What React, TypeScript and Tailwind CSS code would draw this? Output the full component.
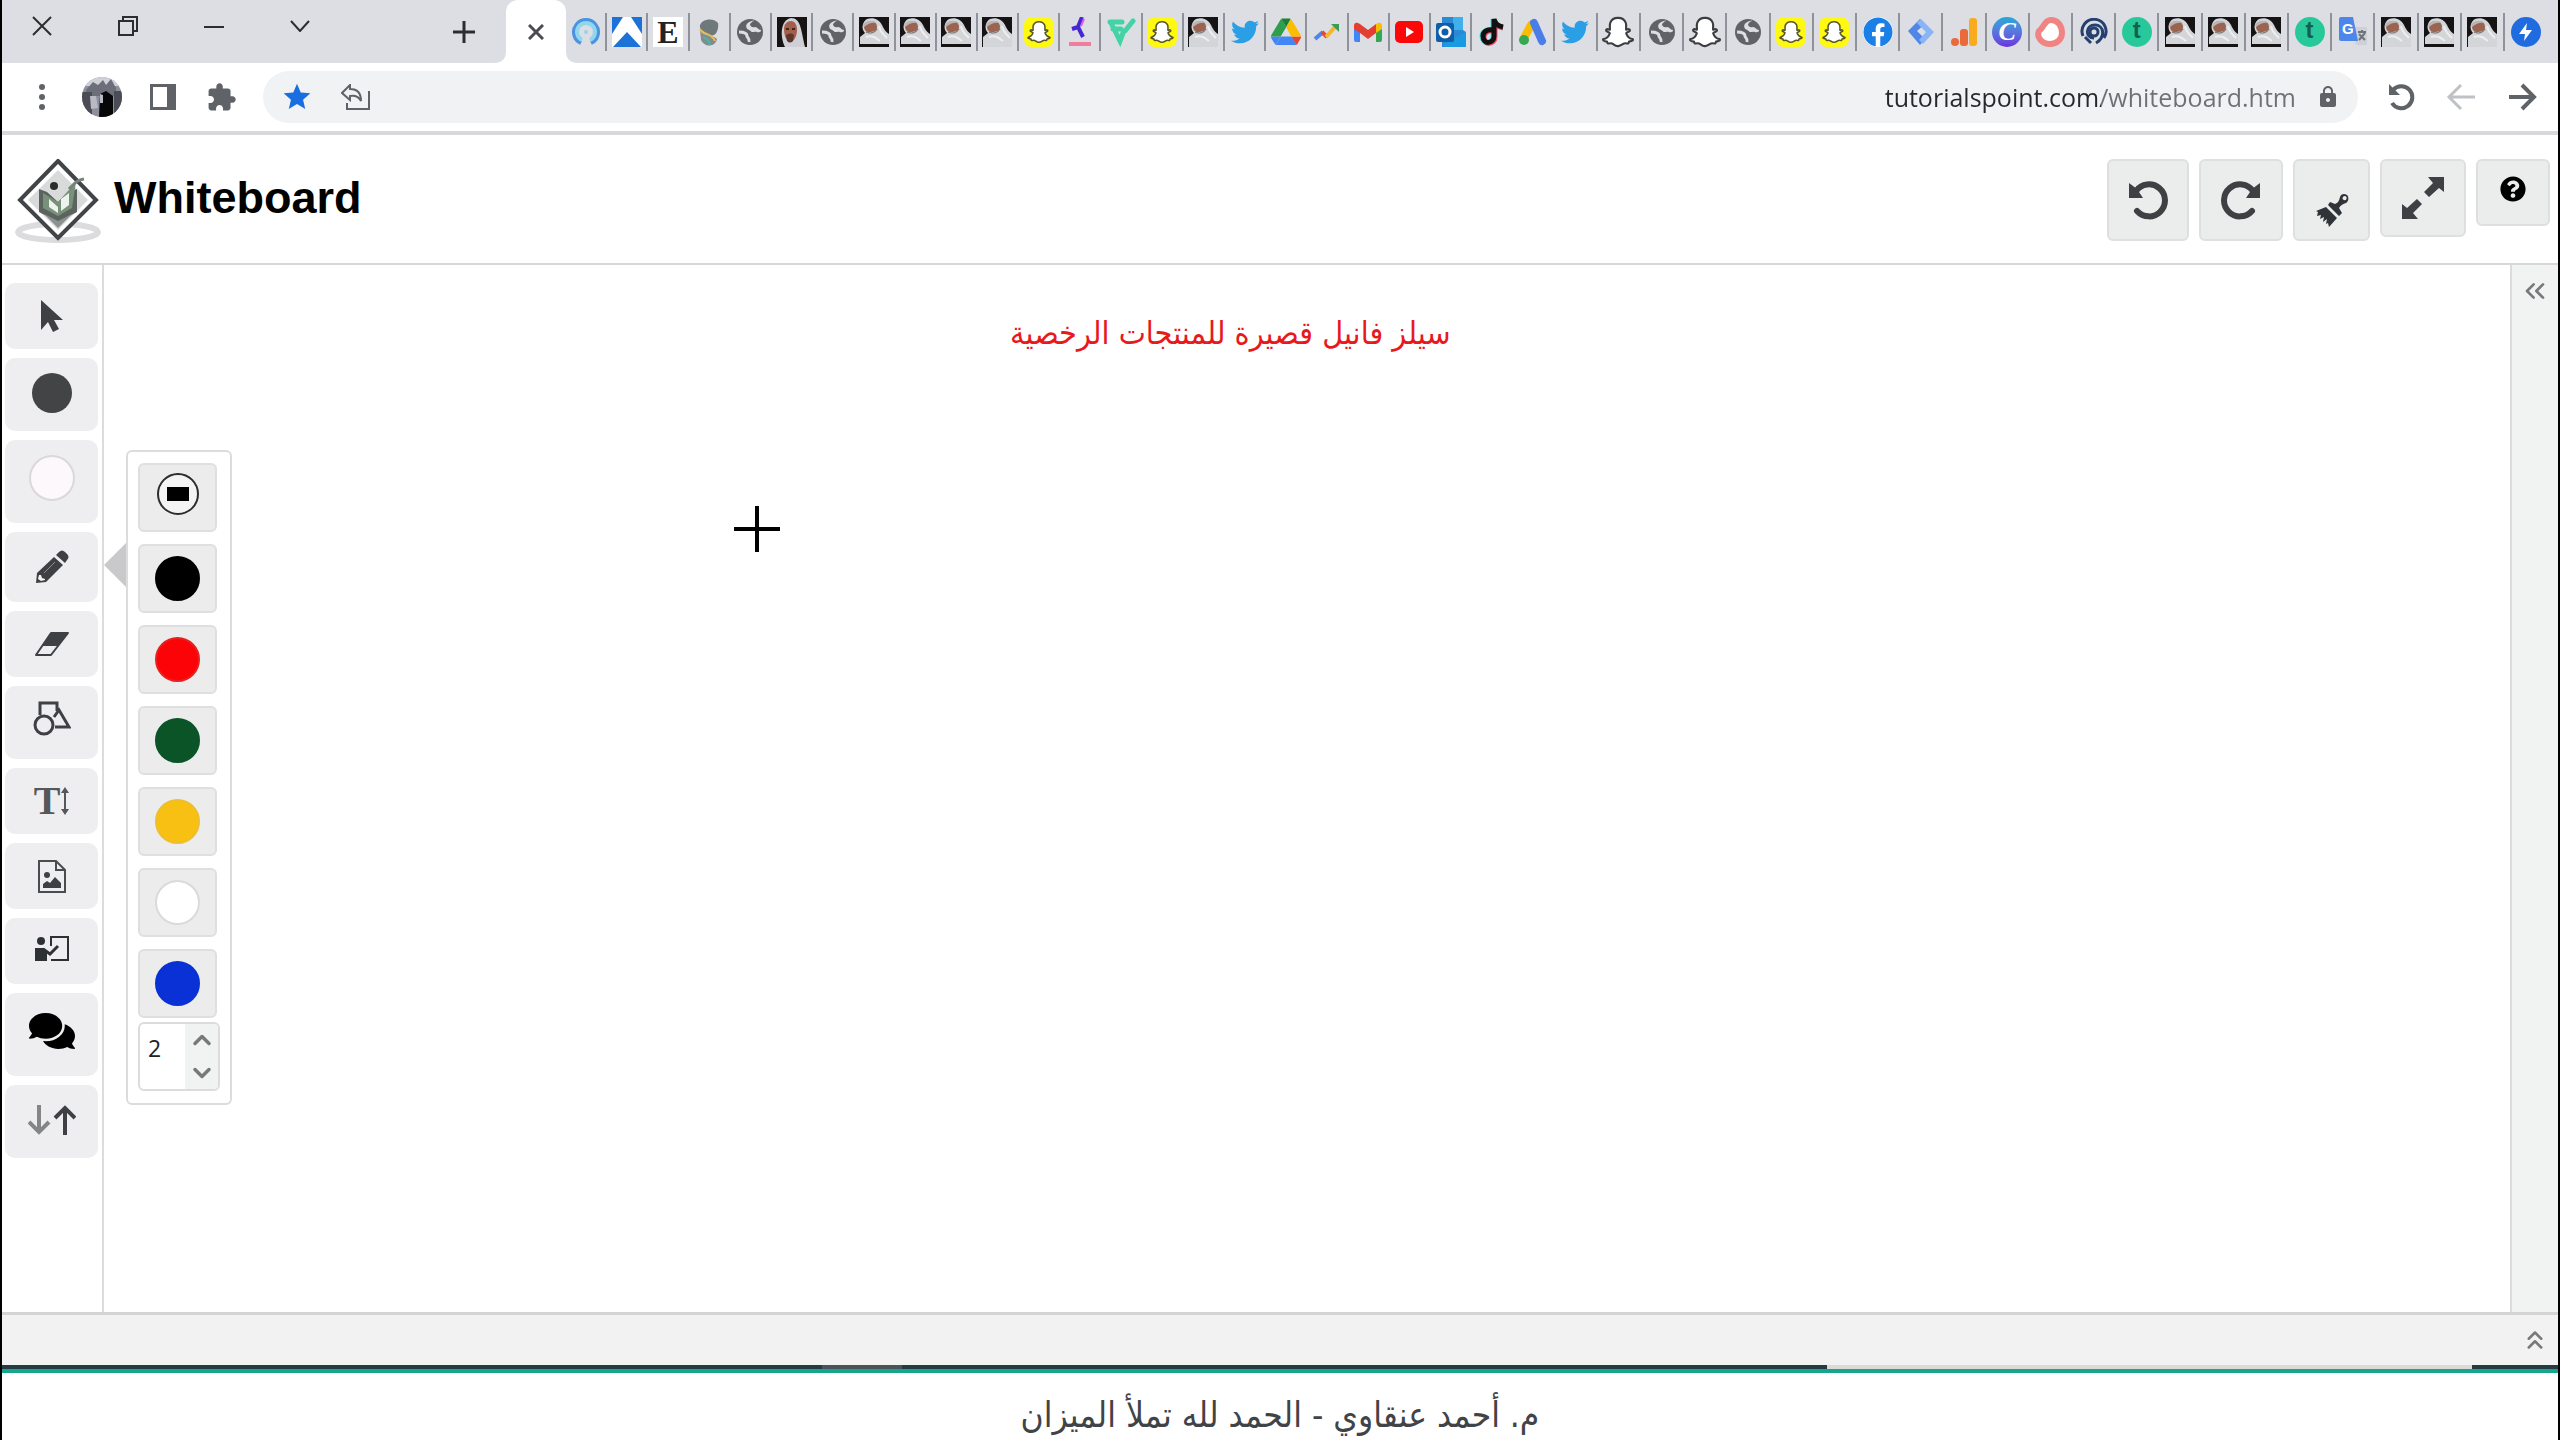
import React, { useState } from 'react';
import { ArrowLeft, ArrowRight, ChevronDown, ChevronUp, ChevronsLeft, ChevronsUp } from 'lucide-react';
import { FaComments, FaFacebook, FaQuestionCircle, FaSnapchatGhost, FaTwitter } from 'react-icons/fa';
import { MdLock, MdStar } from 'react-icons/md';

type FaviconName =
  | 'ring' | 'peak' | 'letterE' | 'swirl' | 'globe' | 'face' | 'photo' | 'photoPlain' | 'snap' | 'kick' | 'vee'
  | 'twitter' | 'drive' | 'trend' | 'gmail' | 'youtube' | 'outlook' | 'tiktok' | 'ads' | 'ghost' | 'facebook'
  | 'tag' | 'analytics' | 'canva' | 'blob' | 'spiral' | 'tee' | 'translate' | 'bolt';

const narrowTabs: FaviconName[] = [
  'ring', 'peak', 'letterE', 'swirl', 'globe', 'face', 'globe', 'photo', 'photo', 'photo', 'photoPlain', 'snap',
  'kick', 'vee', 'snap', 'photoPlain', 'twitter', 'drive', 'trend', 'gmail', 'youtube', 'outlook', 'tiktok', 'ads',
];

const wideTabs: FaviconName[] = [
  'twitter', 'ghost', 'globe', 'ghost', 'globe', 'snap', 'snap', 'facebook', 'tag', 'analytics', 'canva', 'blob',
  'spiral', 'tee', 'photo', 'photo', 'photo', 'tee', 'translate', 'photoPlain', 'photo', 'photoPlain', 'bolt',
];

const Photo: React.FC<{ strip?: boolean }> = ({ strip }) => (
  <svg width="30" height="30" viewBox="0 0 30 30">
    <rect width="30" height="30" fill="#151313" />
    <path d="M1 30V20l5-4C2 12 3 5 8 2c6-2 12 0 15 6 2 4 3 6 7 9v13z" fill="#d3d5d8" />
    <path d="M5 9c0-3 3-5 7-5s6 3 6 6c0 4-4 5-8 5-3 0-5-2-5-6z" fill="#9b6450" />
    <path d="M4 8c2-4 9-6 14-2-4-1-9 0-13 4z" fill="#b9b5b6" />
    <path d="M7 15c4 2 9 1 11-3" stroke="#6e5a55" fill="none" />
    <path d="M20 9c1 6 4 8 8 12M7 20c6-2 9 0 14 4" stroke="#eceef0" strokeWidth="2" fill="none" />
    {strip && <rect y="27" width="30" height="3" fill="#151313" />}
  </svg>
);

const Favicon: React.FC<{ name: FaviconName }> = ({ name }) => {
  switch (name) {
    case 'globe':
      return (
        <svg width="28" height="28" viewBox="0 0 28 28" fill="none">
          <circle cx="14" cy="14" r="13" fill="#5f6368" />
          <path d="M18 4c-5 1-7 3-6 5 2 3 5 2 5 5M3 14c5 0 8 1 8 4 0 2 3 2 2 6" stroke="#dcdee3" strokeWidth="3" />
          <path d="M15 4c6 0 10 4 10 9-3 3-4 0-7 1-3 0-4-3-7-3-1-4 1-6 4-7z" fill="#dcdee3" />
          <path d="M17 3c5 2 8 5 8 9-3 0-3-3-6-3-3 1-5-1-5-3z" fill="#5f6368" />
        </svg>
      );
    case 'twitter':
      return <FaTwitter size={28} color="#2b9fe6" />;
    case 'facebook':
      return <FaFacebook size={30} color="#1b7fe8" className="rounded-full bg-white" />;
    case 'ghost':
      return <FaSnapchatGhost size={30} color="#ffffff" stroke="#3b3d40" strokeWidth={36} overflow="visible" />;
    case 'snap':
      return (
        <span className="flex size-[30px] items-center justify-center rounded-lg bg-[#fff911]">
          <FaSnapchatGhost size={22} color="#ffffff" stroke="#55552a" strokeWidth={36} overflow="visible" />
        </span>
      );
    case 'photo':
      return <Photo strip />;
    case 'photoPlain':
      return <Photo />;
    case 'face':
      return (
        <svg width="30" height="30" viewBox="0 0 30 30">
          <rect width="30" height="30" fill="#171313" />
          <path d="M8 30C3 20 3 3 14 1c10 0 10 12 14 29z" fill="#cfd0d6" />
          <path d="M7 12c0-5 3-8 7-8 4 0 6 4 6 9 0 6-3 12-7 12-4-1-6-7-6-13z" fill="#a35f49" />
          <path d="M9 18c3-2 6-2 8 0l-1 6c-2 2-4 2-6 0z" fill="#5b372d" />
          <path d="M9 12h3m3 0h3" stroke="#3b2420" strokeWidth="2" />
        </svg>
      );
    case 'letterE':
      return (
        <span className="flex size-[30px] items-center justify-center bg-white font-['Liberation_Serif',serif] text-[32px] leading-[30px] font-bold text-[#222222]">
          E
        </span>
      );
    case 'tee':
      return (
        <span className="flex size-[30px] items-center justify-center rounded-full bg-[#27c99a] pb-1 font-['Liberation_Sans',sans-serif] text-[24px] leading-[24px] font-bold text-[#14604d]">
          t
        </span>
      );
    case 'canva':
      return (
        <span className="flex size-[30px] items-center justify-center rounded-full bg-linear-to-b from-[#19a9d8] to-[#6a2fe0] font-['Liberation_Serif',serif] text-[26px] leading-[24px] font-bold text-white italic">
          C
        </span>
      );
    case 'ring':
      return (
        <svg width="30" height="30" viewBox="0 0 30 30" fill="none">
          <path d="M10 26A12 12 0 1 1 20 26" stroke="#4a93df" strokeWidth="4" />
          <path d="M11 23A9 9 0 1 1 19 23" stroke="#8fd6ee" strokeWidth="4" />
          <circle cx="15" cy="15" r="2" fill="#8fd6ee" />
        </svg>
      );
    case 'peak':
      return (
        <svg width="30" height="30" viewBox="0 0 30 30">
          <rect width="30" height="30" fill="#fff" />
          <path d="M0 0h11L0 17zM19 0h11v17zM15 15l14 15H1z" fill="#1d72d8" />
        </svg>
      );
    case 'swirl':
      return (
        <svg width="30" height="30" viewBox="0 0 30 30" fill="none">
          <path d="M24 6C19 0 8 2 6 8c-1 5 4 8 10 10 7 3 9-8 8-12z" fill="#6f797c" />
          <path d="M6 13c2 6 14 5 17 9-2 9-13 8-16 1z" fill="#858b8d" />
          <path d="M6 12c3 6 12 4 15 12" stroke="#e2bd54" strokeWidth="2" />
          <path d="M9 20c3 1 6 3 7 8" stroke="#42b8a6" strokeWidth="2" />
        </svg>
      );
    case 'kick':
      return (
        <svg width="30" height="30" viewBox="0 0 30 30" fill="none">
          <path d="M17 0L13 10l5 10M13 10L7 12" stroke="#4726d8" strokeWidth="4" />
          <path d="M19 2l-3 7" stroke="#e35ae0" strokeWidth="2" />
          <path d="M4 27h22" stroke="#ef7d9b" strokeWidth="4" />
        </svg>
      );
    case 'vee':
      return (
        <svg width="30" height="30" viewBox="0 0 30 30" fill="none" stroke="#43d3a5" strokeWidth="5" strokeLinecap="round">
          <path d="M4 5h12M7 12h8M5 6l9 18 3-8M19 14l8-10" />
        </svg>
      );
    case 'drive':
      return (
        <svg width="30" height="28" viewBox="0 0 87 78">
          <path d="M7 67l4 6c1 2 2 3 3 3l14-24H0c0 2 0 3 1 5z" fill="#4285f4" />
          <path d="M44 25L30 1c-1 1-3 2-3 3L1 48c-1 2-1 3-1 4h28z" fill="#2e9e4d" />
          <path d="M74 76c1 0 3-1 3-3l10-17c0-1 0-3 0-4H59l6 12z" fill="#ea4335" />
          <path d="M44 25L57 1c-1-1-3-1-5-1H35c-2 0-4 0-5 1z" fill="#188038" />
          <path d="M59 52H28L14 76c1 1 3 1 4 1h51c2 0 3 0 5-1z" fill="#4285f4" />
          <path d="M73 26L60 4c-1-1-2-2-3-3L44 25l15 27h28c0-1 0-3-1-4z" fill="#fbbc04" />
        </svg>
      );
    case 'trend':
      return (
        <svg width="30" height="30" viewBox="0 0 30 30" fill="none" strokeWidth="4">
          <path d="M3 22l8-7" stroke="#4f86ec" />
          <path d="M10 15l5 5" stroke="#dd4b3e" />
          <path d="M14 20l9-10" stroke="#f5b62c" />
          <path d="M19 7h8v8z" fill="#3a9c57" />
        </svg>
      );
    case 'gmail':
      return (
        <svg width="28" height="20" viewBox="0 0 28 20">
          <path d="M0 3l6 4v13H2c-1 0-2-1-2-2z" fill="#4285f4" />
          <path d="M28 3l-6 4v13h4c1 0 2-1 2-2z" fill="#34a853" />
          <path d="M22 2l2-1c2-1 4 0 4 3v3l-6 4z" fill="#fbbc04" />
          <path d="M6 2L4 1C2 0 0 1 0 4v3l6 4 8 6 8-6V2l-8 6z" fill="#e23e32" />
        </svg>
      );
    case 'youtube':
      return (
        <svg width="28" height="22" viewBox="0 0 28 22">
          <rect width="28" height="22" rx="5" fill="#fb0808" />
          <path d="M11 6l8 5-8 5z" fill="#fff" />
        </svg>
      );
    case 'outlook':
      return (
        <svg width="30" height="30" viewBox="0 0 30 30">
          <path d="M6 0h21v13l3 2v15H6z" fill="#2a8ad6" />
          <path d="M17 0h10v13H17z" fill="#3fb0ec" />
          <path d="M7 28l23-13v15H9z" fill="#1b9ae4" />
          <rect y="6" width="18" height="19" rx="2" fill="#0f5ea8" />
          <circle cx="9" cy="15" r="5" fill="none" stroke="#fff" strokeWidth="3" />
        </svg>
      );
    case 'tiktok':
      return (
        <svg width="26" height="30" viewBox="0 0 26 30" fill="none" strokeWidth="5">
          <path d="M12 13c-5-1-9 2-9 6 0 9 11 8 11 0V2c1 5 4 7 9 8" stroke="#52d7dc" />
          <path d="M14 14c-5-1-9 2-9 6 0 9 11 8 11 0V4c1 5 4 6 8 7" stroke="#ee4c68" />
          <path d="M13 13c-5-1-9 2-9 6 0 9 11 8 11 0V2c1 5 4 7 9 8" stroke="#111" />
        </svg>
      );
    case 'ads':
      return (
        <svg width="30" height="28" viewBox="0 0 30 28" strokeLinecap="round">
          <path d="M13 7L6 20" stroke="#fbbc04" strokeWidth="8" />
          <path d="M16 5l8 18" stroke="#4a7de8" strokeWidth="8" />
          <circle cx="6" cy="22" r="5" fill="#34a853" />
        </svg>
      );
    case 'tag':
      return (
        <svg width="30" height="30" viewBox="0 0 30 30">
          <path d="M14 2l-12 12 12 14 5-6-8-8 8-7z" fill="#4f86e8" />
          <path d="M15 2l13 13-11 12-4-4 7-8-9-9z" fill="#8ab4f8" />
        </svg>
      );
    case 'analytics':
      return (
        <svg width="28" height="28" viewBox="0 0 28 28">
          <circle cx="5" cy="24" r="4" fill="#ea6a3c" />
          <rect x="10" y="11" width="8" height="17" rx="3" fill="#ea6a3c" />
          <rect x="19" width="8" height="28" rx="3" fill="#f9ab20" />
        </svg>
      );
    case 'blob':
      return (
        <svg width="30" height="30" viewBox="0 0 30 30">
          <path d="M4 14C9 11 9 3 16 3c7 0 11 6 11 13 0 6-5 11-12 11C7 27 1 20 4 14z" fill="#fff" stroke="#f08383" strokeWidth="6" />
        </svg>
      );
    case 'spiral':
      return (
        <svg width="28" height="28" viewBox="0 0 28 28" fill="none" stroke="#25406f" strokeWidth="3">
          <circle cx="14" cy="14" r="4" />
          <path d="M14 20c-9 0-9-13 1-13 9 0 11 12 1 18M3 18A12 12 0 1 1 24 20M5 19l6 6" />
        </svg>
      );
    case 'translate':
      return (
        <svg width="30" height="30" viewBox="0 0 30 30">
          <path d="M13 10h14c2 0 2 1 2 2v16H18z" fill="#cdd0d6" />
          <path d="M1 2c0-1 1-2 2-2h12l5 24H3c-1 0-2-1-2-2z" fill="#4c86ea" />
          <text x="4" y="17" fontSize="15" fontWeight="700" fontFamily="Liberation Sans, sans-serif" fill="#fff">G</text>
          <path d="M20 15h8M24 13v3M21 23l6-7M21 17l6 6" stroke="#6f747b" strokeWidth="2" fill="none" />
        </svg>
      );
    case 'bolt':
      return (
        <svg width="30" height="30" viewBox="0 0 30 30">
          <circle cx="15" cy="15" r="15" fill="#1f6ce0" />
          <path d="M16 6L8 17h6l-1 7 8-11h-6z" fill="#fff" />
        </svg>
      );
  }
};

const TabGroup: React.FC<{ tabs: FaviconName[]; className: string }> = ({ tabs, className }) => (
  <div className={`flex min-w-0 basis-0 items-center ${className}`}>
    {tabs.map((name, index) => (
      <button
        key={index}
        aria-label={name}
        className={`flex h-[38px] min-w-0 flex-1 items-center justify-center ${name === 'bolt' ? '' : 'border-r-2 border-[#8f9298]'}`}
      >
        <Favicon name={name} />
      </button>
    ))}
  </div>
);

const TabStrip: React.FC = () => (
  <div className="flex h-[63px] items-center bg-[#dcdee3] pr-3">
    <div className="flex w-[482px] shrink-0 items-center gap-[46px] pl-5 text-[#2c2d30]">
      <button aria-label="Close window" className="flex h-[52px] w-10 items-center justify-center self-start">
        <svg width="20" height="20" viewBox="0 0 20 20" stroke="currentColor" strokeWidth="2"><path d="M1 1l18 18M19 1L1 19" /></svg>
      </button>
      <button aria-label="Restore" className="flex h-[52px] w-10 items-center justify-center self-start">
        <svg width="20" height="20" viewBox="0 0 20 20" fill="none" stroke="currentColor" strokeWidth="2"><path d="M1 5h14v14H1zM5 5V1h14v14h-4" /></svg>
      </button>
      <button aria-label="Minimize" className="flex h-[54px] w-10 items-center justify-center self-start">
        <svg width="20" height="2" viewBox="0 0 20 2" stroke="currentColor" strokeWidth="2"><path d="M0 1h20" /></svg>
      </button>
      <button aria-label="Search tabs" className="flex h-[52px] w-10 items-center justify-center self-start">
        <svg width="20" height="12" viewBox="0 0 20 12" fill="none" stroke="currentColor" strokeWidth="2"><path d="M1 1l9 10 9-10" /></svg>
      </button>
      <button aria-label="New tab" className="ml-auto flex h-16 w-10 items-center justify-center">
        <svg width="22" height="22" viewBox="0 0 22 22" stroke="currentColor" strokeWidth="3"><path d="M11 0v22M0 11h22" /></svg>
      </button>
    </div>
    <div className="relative ml-[22px] flex h-full w-[60px] shrink-0 items-center justify-center rounded-t-xl bg-white">
      <svg className="absolute bottom-0 -left-3" width="12" height="12" viewBox="0 0 12 12"><path d="M12 0v12H0C8 12 12 8 12 0z" fill="#fff" /></svg>
      <svg className="absolute -right-3 bottom-0" width="12" height="12" viewBox="0 0 12 12"><path d="M0 0v12h12C4 12 0 8 0 0z" fill="#fff" /></svg>
      <button aria-label="Close tab">
        <svg width="16" height="16" viewBox="0 0 16 16" stroke="#4a4c50" strokeWidth="3"><path d="M1 1l14 14M15 1L1 15" /></svg>
      </button>
    </div>
    <TabGroup tabs={narrowTabs} className="grow-[990]" />
    <TabGroup tabs={wideTabs} className="grow-[993]" />
  </div>
);

const AddressBar: React.FC = () => {
  const [url, setUrl] = useState('tutorialspoint.com/whiteboard.htm');

  return (
    <div className="flex h-[72px] items-center border-b-4 border-[#d7d8db] bg-white pr-5 pl-5 text-[#5f6368]">
      <button aria-label="Menu" className="flex w-10 justify-center">
        <svg width="6" height="26" viewBox="0 0 6 26" fill="currentColor"><circle cx="3" cy="3" r="3" /><circle cx="3" cy="13" r="3" /><circle cx="3" cy="23" r="3" /></svg>
      </button>
      <button aria-label="Profile" className="ml-5 size-10 overflow-hidden rounded-full">
        <svg width="40" height="40" viewBox="0 0 40 40">
          <rect width="40" height="40" fill="#8d909c" />
          <path d="M0 0h40v9H0z" fill="#cfd0d8" />
          <path d="M4 13l7-8 5 3 5-5 3 5 5-6 5 9v8H4z" fill="#6c6f7a" />
          <path d="M0 15h10v25H0zM32 14h8v26h-8z" fill="#4a4c56" />
          <path d="M18 17l6-3 7 5v21H17z" fill="#070709" />
          <path d="M8 19h6l2 12-7 1zM18 17l3 1v8h-3z" fill="#b9bac4" />
        </svg>
      </button>
      <button aria-label="Side panel" className="ml-7">
        <svg width="26" height="26" viewBox="0 0 26 26"><path d="M0 0h26v26H0zM3 3v20h14V3z" fill="currentColor" fillRule="evenodd" /></svg>
      </button>
      <button aria-label="Extensions" className="ml-[30px]">
        <svg width="31" height="31" viewBox="0 0 24 24" fill="currentColor">
          <path d="M20.5 11H19V7c0-1.1-.9-2-2-2h-4V3.5C13 2.12 11.88 1 10.5 1S8 2.12 8 3.5V5H4c-1.1 0-1.99.9-1.99 2v3.8H3.5c1.49 0 2.7 1.21 2.7 2.7s-1.21 2.7-2.7 2.7H2V20c0 1.1.9 2 2 2h3.8v-1.5c0-1.49 1.21-2.7 2.7-2.7 1.49 0 2.7 1.21 2.7 2.7V22H17c1.1 0 2-.9 2-2v-4h1.5c1.38 0 2.5-1.12 2.5-2.5S21.88 11 20.5 11z" />
        </svg>
      </button>
      <div className="ml-[26px] flex h-[52px] grow items-center rounded-full bg-[#f1f2f4] px-[18px]">
        <button aria-label="Bookmark"><MdStar size={32} color="#1a6fe0" /></button>
        <button aria-label="Share" className="ml-7">
          <svg width="30" height="26" viewBox="0 0 30 26" fill="none" stroke="currentColor" strokeWidth="2">
            <path d="M28 7v18H6v-6" />
            <path d="M9 1L1 9l8 7v-4c6-1 9 1 11 5 0-7-3-12-11-12z" />
          </svg>
        </button>
        <input
          type="text"
          dir="ltr"
          aria-label="Address"
          value={url}
          onChange={(e) => setUrl(e.target.value)}
          className="h-10 min-w-0 grow bg-linear-to-l from-[#6d7175] from-[195px] to-[#26282c] to-[195px] bg-clip-text text-right font-['Open_Sans',sans-serif] text-[25px] text-transparent outline-none"
        />
        <MdLock size={24} className="ml-5" />
      </div>
      <div className="ml-[28px] flex items-center gap-7">
        <button aria-label="Reload">
          <svg width="32" height="28" viewBox="0 0 32 28" fill="none" stroke="currentColor" strokeWidth="4">
            <path d="M7 7a11 11 0 1 1-1 13" />
            <path d="M3 1v11h11z" fill="currentColor" stroke="none" />
          </svg>
        </button>
        <button aria-label="Forward" className="text-[#bfc1c4]">
          <svg width="32" height="28" viewBox="0 0 32 28" fill="none" stroke="currentColor" strokeWidth="3"><path d="M29 14H4M15 2L3 14l12 12" /></svg>
        </button>
        <button aria-label="Back">
          <svg width="32" height="28" viewBox="0 0 32 28" fill="none" stroke="currentColor" strokeWidth="4"><path d="M3 14h24M16 2l12 12-12 12" /></svg>
        </button>
      </div>
    </div>
  );
};

const Logo: React.FC = () => (
  <svg width="88" height="86" viewBox="0 0 88 86" fill="none">
    <ellipse cx="44" cy="73" rx="40" ry="8" stroke="#dcdcde" strokeWidth="6" />
    <path d="M44 2L82 41 44 79 6 41z" fill="#fff" stroke="#414548" strokeWidth="4" />
    <path d="M44 11l30 30-30 30-30-30z" fill="#d9dbdb" />
    <path d="M25 30v23l19 10 19-10V30l-8 3-11 10-11-10z" fill="#5c6260" />
    <path d="M29 34l15 9 18-20-4 26-14 8-15-8z" fill="#789179" />
    <path d="M35 40l9 8v6l-9-6zM47 40l8-6v12l-8 6z" fill="#edf3ee" />
    <path d="M30 55l14 14 14-14-14 7z" fill="#8b928e" />
    <circle cx="40" cy="27" r="4" fill="#2e2b2e" />
    <path d="M55 30c6-6 8-9 15-10" stroke="#75837a" strokeWidth="3" />
  </svg>
);

const UndoIcon: React.FC<{ flip?: boolean }> = ({ flip }) => (
  <svg width="40" height="40" viewBox="0 0 40 40" fill="none" className={flip ? '-scale-x-100' : ''}>
    <path d="M8 11a16 16 0 1 1 1 20" stroke="#3e4144" strokeWidth="6" strokeLinecap="round" />
    <path d="M1 3l8 6 6 9H1z" fill="#3e4144" />
  </svg>
);

const Header: React.FC = () => (
  <header className="flex h-[130px] items-start justify-between border-b-2 border-[#d7d7d8] bg-white pt-6 pr-2 pl-3">
    <div className="flex items-center gap-3">
      <Logo />
      <h1 className="pb-2 font-['Liberation_Sans',sans-serif] text-[45px] leading-[72px] font-bold text-black">Whiteboard</h1>
    </div>
    <div className="flex items-start gap-[10px]">
      <button aria-label="Undo" className="flex h-[82px] w-[82px] items-center justify-center rounded-md border-2 border-[#dedfdf] bg-[#ebecec]">
        <UndoIcon />
      </button>
      <button aria-label="Redo" className="flex h-[82px] w-[84px] items-center justify-center rounded-md border-2 border-[#dedfdf] bg-[#ebecec]">
        <UndoIcon flip />
      </button>
      <button aria-label="Clear" className="flex h-[82px] w-[77px] items-center justify-center rounded-md border-2 border-[#dedfdf] bg-[#ebecec] pt-5">
        <svg width="34" height="34" viewBox="0 0 34 34" fill="#2e3438">
          <path d="M32 2c-3-2-6-1-7 2-1 4-2 6-5 7l-5-2-2 3 11 11 3-3-3-5c2-3 4-4 7-5 3-2 3-6 1-8zm-4 2a2 2 0 1 1 1 3 2 2 0 0 1-1-3z" fillRule="evenodd" />
          <path d="M11 14l11 11-8 9-1-4-2 1 1-5-4 3 1-5-4 2 1-4-4 1 1-4-2-1z" />
        </svg>
      </button>
      <button aria-label="Fullscreen" className="flex h-[78px] w-[86px] items-center justify-center rounded-md border-2 border-[#dedfdf] bg-[#ebecec]">
        <svg width="44" height="44" viewBox="0 0 44 44" fill="#3e4144">
          <path d="M27 1h16v15l-5-4-10 9-5-5 9-9zM17 43H1V28l5 4 10-9 5 5-9 9z" />
        </svg>
      </button>
      <button aria-label="Help" className="flex h-[67px] w-[74px] items-center justify-center rounded-md border-2 border-[#dedfdf] bg-[#ebecec] pb-2">
        <FaQuestionCircle size={26} color="#000000" />
      </button>
    </div>
  </header>
);

const tools = [
  {
    label: 'Select',
    className: 'h-[66px]',
    icon: (
      <svg width="22" height="33" viewBox="0 0 22 33" fill="#3e4043"><path d="M0 0l22 20h-9l5 9-6 3-5-10-7 8z" /></svg>
    ),
  },
  { label: 'Dot', className: 'h-[73px] pb-1', icon: <span className="size-10 rounded-full bg-[#434446]" /> },
  {
    label: 'Background',
    className: 'h-[83px] pb-2',
    icon: <span className="size-[46px] rounded-full border-2 border-[#dad9da] bg-[#fdf8fb]" />,
  },
  {
    label: 'Pencil',
    className: 'h-[70px]',
    icon: (
      <svg width="34" height="34" viewBox="0 0 34 34">
        <path d="M24 2c2-2 4-2 6 0l2 2c2 2 2 4 0 6l-2 3-9-8z" fill="#3e4043" />
        <path d="M19 7l9 8-17 17-10 1 1-10z" fill="#3e4043" />
        <path d="M4 25l2 0 1 3 3 1 0 1-4 1-3-2z" fill="#f2f2f3" />
        <path d="M9 23L20 12" stroke="#8c8e90" fill="none" />
      </svg>
    ),
  },
  {
    label: 'Eraser',
    className: 'h-[66px]',
    icon: (
      <svg width="36" height="24" viewBox="0 0 36 24">
        <path d="M17 1h17L24 14H8z" fill="#3e4043" />
        <path d="M17 1h17L17 23H2z" fill="none" stroke="#3e4043" strokeWidth="2" strokeLinejoin="round" />
      </svg>
    ),
  },
  {
    label: 'Shapes',
    className: 'h-[73px] pb-2',
    icon: (
      <svg width="38" height="36" viewBox="0 0 38 36" fill="none" stroke="#3e4043" strokeWidth="3">
        <path d="M7 14V2h17v8M21 16l5-7 10 17H22" />
        <circle cx="11" cy="24" r="9" />
      </svg>
    ),
  },
  {
    label: 'Text',
    className: 'h-[66px]',
    icon: (
      <span className="flex items-center gap-px text-[#55585b]">
        <span className="font-['Liberation_Serif',serif] text-[40px] leading-[40px] font-bold">T</span>
        <svg width="8" height="28" viewBox="0 0 8 28" fill="currentColor"><path d="M4 0l4 6H5v16h3l-4 6-4-6h3V6H0z" /></svg>
      </span>
    ),
  },
  {
    label: 'Image',
    className: 'h-[66px]',
    icon: (
      <svg width="28" height="33" viewBox="0 0 28 33">
        <path d="M1 1h17l9 9v22H1zM18 1v9h9" fill="none" stroke="#4a4d50" strokeWidth="2" />
        <circle cx="9" cy="15" r="3" fill="#3e4043" />
        <path d="M5 28v-4l4-3 3 2 5-6 6 6v5z" fill="#3e4043" />
      </svg>
    ),
  },
  {
    label: 'Presentation',
    className: 'h-[66px] pb-1',
    icon: (
      <svg width="36" height="26" viewBox="0 0 36 26" fill="none" stroke="#2e3134" strokeWidth="2">
        <path d="M17 10V1h17v23H17" />
        <path d="M9 13l7 5 8-8" strokeWidth="3" />
        <circle cx="7" cy="5" r="4" fill="#2e3134" stroke="none" />
        <path d="M1 12h9l3 4v9H1z" fill="#2e3134" stroke="none" />
      </svg>
    ),
  },
  { label: 'Chat', className: 'h-[83px] pb-2', icon: <FaComments size={46} color="#000000" /> },
  {
    label: 'Move',
    className: 'h-[73px] pb-1',
    icon: (
      <svg width="48" height="30" viewBox="0 0 48 30" fill="none" strokeWidth="4">
        <path d="M11 0v28M1 17l10 10 10-10" stroke="#838587" />
        <path d="M37 30V2M27 13L37 3l10 10" stroke="#3e4043" />
      </svg>
    ),
  },
];

const swatches = [
  { label: 'Black', className: 'bg-black border-black' },
  { label: 'Red', className: 'bg-[#fb0307] border-[#e8201f]' },
  { label: 'Green', className: 'bg-[#0a5428] border-[#0a5428]' },
  { label: 'Yellow', className: 'bg-[#f7c012] border-[#edbf2c]' },
  { label: 'White', className: 'bg-white border-[#dadada]' },
  { label: 'Blue', className: 'bg-[#0a31d6] border-[#0a31d6]' },
];

const PencilPanel: React.FC = () => {
  const [size, setSize] = useState(2);

  return (
    <div className="absolute top-[185px] left-[124px] z-10 w-[106px] rounded-md border-2 border-[#dcdcdc] bg-white pt-[11px] pb-3 pl-[10px]">
      <svg className="absolute top-[91px] -left-6" width="22" height="44" viewBox="0 0 22 44"><path d="M22 0v44L0 22z" fill="#c9c9cb" /></svg>
      <div className="flex flex-col gap-3">
        <button aria-label="Shape fill" className="flex h-[69px] w-[79px] items-center justify-center rounded-md border-2 border-[#dfdfdf] bg-[#ececec] pb-2">
          <span className="flex size-[42px] items-center justify-center rounded-full border-2 border-[#2b2d2f] bg-[#f4f4f4]">
            <span className="h-[14px] w-[22px] bg-black" />
          </span>
        </button>
        {swatches.map((swatch) => (
          <button
            key={swatch.label}
            aria-label={swatch.label}
            className="flex h-[69px] w-[79px] items-center justify-center rounded-md border-2 border-[#dfdfdf] bg-[#ececec]"
          >
            <span className={`size-[45px] rounded-full border-2 ${swatch.className}`} />
          </button>
        ))}
      </div>
      <div className="mt-1 flex h-[69px] w-[82px] overflow-hidden rounded-md border-2 border-[#dcdcdc]">
        <input
          type="text"
          inputMode="numeric"
          aria-label="Line width"
          value={size}
          onChange={(e) => setSize(Number(e.target.value) || 1)}
          className="w-[45px] pb-4 pl-2 font-['Open_Sans',sans-serif] text-[23px] text-[#222222] outline-none"
        />
        <div className="flex grow flex-col bg-[#f1f3f3] text-[#76787a]">
          <button aria-label="Increase" className="flex flex-1 items-center justify-center" onClick={() => setSize(size + 1)}>
            <ChevronUp size={28} strokeWidth={3} />
          </button>
          <button aria-label="Decrease" className="flex flex-1 items-center justify-center" onClick={() => setSize(Math.max(1, size - 1))}>
            <ChevronDown size={28} strokeWidth={3} />
          </button>
        </div>
      </div>
    </div>
  );
};

const App: React.FC = () => {
  return (
    <div className="flex min-h-screen flex-col border-x-2 border-black bg-white">
      <TabStrip />
      <AddressBar />
      <Header />
      <main className="relative flex grow">
        <nav className="flex w-[102px] shrink-0 flex-col gap-[9px] border-r-2 border-[#dcdcdc] pt-[18px] pl-[3px]">
          {tools.map((tool) => (
            <button
              key={tool.label}
              aria-label={tool.label}
              className={`flex w-[93px] items-center justify-center rounded-[10px] bg-[#eeeef0] ${tool.className}`}
            >
              {tool.icon}
            </button>
          ))}
        </nav>
        <PencilPanel />
        <section className="relative grow">
          <p dir="rtl" className="absolute top-11 left-[906px] font-['DejaVu_Sans_Condensed','DejaVu_Sans',sans-serif] text-[32px] leading-[48px] whitespace-nowrap text-[#e8191d]">
            سيلز فانيل قصيرة للمنتجات الرخصية
          </p>
          <svg className="absolute top-[241px] left-[630px]" width="46" height="46" viewBox="0 0 46 46" stroke="#000" strokeWidth="4">
            <path d="M23 0v46M0 23h46" />
          </svg>
        </section>
        <aside className="flex w-12 shrink-0 items-start justify-center border-l-2 border-[#dcdcdc] bg-[#f1f2f2] pt-[10px]">
          <button aria-label="Expand panel" className="text-[#77797b]"><ChevronsLeft size={32} strokeWidth={2} /></button>
        </aside>
      </main>
      <div className="flex h-[53px] items-center justify-end border-t-[3px] border-[#d4d4d4] bg-[#f2f2f3] pr-2">
        <button aria-label="Expand bottom panel" className="text-[#77797b]"><ChevronsUp size={30} strokeWidth={2} /></button>
      </div>
      <div className="flex h-1 bg-[#263a41]">
        <div className="basis-0 grow-[820]" />
        <div className="basis-0 grow-[80] bg-[#4a5357]" />
        <div className="basis-0 grow-[925]" />
        <div className="basis-0 grow-[645] bg-[#dcd9d6]" />
        <div className="basis-0 grow-[86]" />
      </div>
      <footer className="flex h-[71px] items-center justify-center border-t-4 border-[#14a78d] pt-4">
        <p dir="rtl" className="font-['DejaVu_Sans_Condensed','DejaVu_Sans',sans-serif] text-[35px] leading-10 whitespace-nowrap text-[#404448]">
          م. أحمد عنقاوي - الحمد لله تملأ الميزان
        </p>
      </footer>
    </div>
  );
};

export default App;
